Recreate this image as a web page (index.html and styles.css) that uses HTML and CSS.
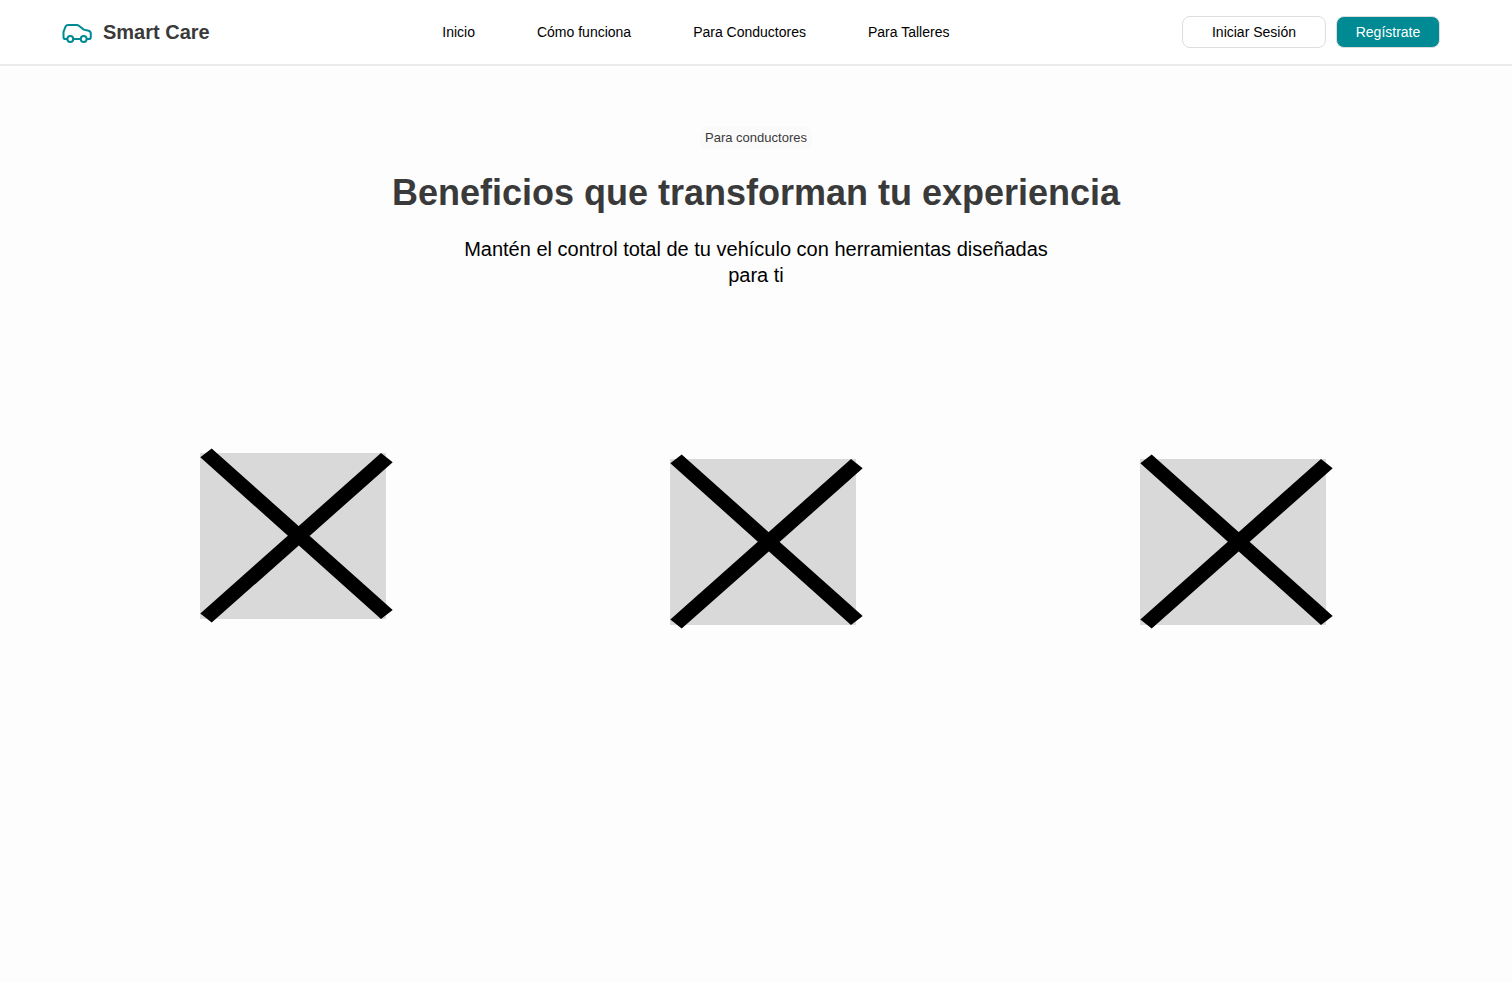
FILE: index.html
```
<!DOCTYPE html>
<html lang="es">
<head>
  <meta charset="utf-8">
  <meta name="viewport" content="width=device-width, initial-scale=1">
  <title>Smart Care</title>
  <link rel="stylesheet" href="styles.css">
</head>
<body>
  <header class="header">
    <a class="brand" href="#">
      <svg class="brand-icon" width="30" height="22" viewBox="0 -2 30 22" fill="none" stroke="currentColor" stroke-width="2" stroke-linejoin="round" aria-hidden="true">
        <path d="M5.2 16H3.3Q1.5 16 1.5 14.2V8.8L3.5 3.7Q4.2 2 6.2 2H14.6Q16 2 17.2 3L21.8 6.6L26.6 7.8Q28.8 8.5 28.8 10.6V14.2Q28.8 16 27 16H24.9M11.4 16H18.6"/>
        <circle cx="8.3" cy="16" r="2.9"/>
        <circle cx="21.7" cy="16" r="2.9"/>
      </svg>
      <span>Smart Care</span>
    </a>
    <nav class="nav">
      <a href="#">Inicio</a>
      <a href="#">Cómo funciona</a>
      <a href="#">Para Conductores</a>
      <a href="#">Para Talleres</a>
    </nav>
    <div class="actions">
      <button class="button button-login" type="button">Iniciar Sesión</button>
      <button class="button button-signup" type="button">Regístrate</button>
    </div>
  </header>
  <main class="main">
    <section class="intro">
      <span class="tag">Para conductores</span>
      <h1 class="title">Beneficios que transforman tu experiencia</h1>
      <p class="lead">Mantén el control total de tu vehículo con herramientas diseñadas para ti</p>
    </section>
    <section class="benefits">
      <svg class="placeholder" viewBox="0 0 193 176" aria-hidden="true">
        <path fill="#d9d9d9" d="M0 5h186v166H0z"/>
        <path d="M.3 9.3 11.7.5 192.7 162 181 171zM181 5l11.7 9.3L11.7 174.6.3 165.4z"/>
      </svg>
      <svg class="placeholder placeholder-low" viewBox="0 0 193 176" aria-hidden="true">
        <path fill="#d9d9d9" d="M0 5h186v166H0z"/>
        <path d="M.3 9.3 11.7.5 192.7 162 181 171zM181 5l11.7 9.3L11.7 174.6.3 165.4z"/>
      </svg>
      <svg class="placeholder placeholder-low" viewBox="0 0 193 176" aria-hidden="true">
        <path fill="#d9d9d9" d="M0 5h186v166H0z"/>
        <path d="M.3 9.3 11.7.5 192.7 162 181 171zM181 5l11.7 9.3L11.7 174.6.3 165.4z"/>
      </svg>
    </section>
  </main>
</body>
</html>
```

FILE: styles.css
```
* {
  box-sizing: border-box;
}

body {
  margin: 0;
  background: #fdfdfd;
  color: #000;
  font-family: "Liberation Sans", Arial, sans-serif;
}

.header {
  display: flex;
  align-items: center;
  justify-content: space-between;
  min-height: 66px;
  padding: 0 72px 0 62px;
  border-bottom: 2px solid #ebebeb;
  background: #fff;
}

.brand {
  display: flex;
  align-items: center;
  gap: 11px;
  color: #3a3a3a;
  font-size: 20px;
  font-weight: 700;
  line-height: 24px;
  text-decoration: none;
}

.brand-icon {
  color: #008a93;
}

.nav {
  display: flex;
  gap: 62px;
}

.nav a {
  color: #000;
  font-size: 14px;
  line-height: 20px;
  text-decoration: none;
}

.actions {
  display: flex;
  gap: 10px;
}

.button {
  height: 32px;
  border: 1px solid #dedede;
  border-radius: 8px;
  font: 14px/20px "Liberation Sans", Arial, sans-serif;
}

.button-login {
  min-width: 144px;
  background: #fff;
  color: #000;
}

.button-signup {
  min-width: 104px;
  background: #008a93;
  color: #fff;
}

.intro {
  display: flex;
  flex-direction: column;
  align-items: center;
  padding: 61px 24px 0;
  text-align: center;
}

.tag {
  padding: 2px 5px;
  border-radius: 8px;
  background: #fafafa;
  color: #3a3a3a;
  font-size: 13px;
  line-height: 18px;
}

.title {
  margin: 20px 0 0;
  color: #3a3a3a;
  font-size: 36px;
  font-weight: 700;
  line-height: 48px;
}

.lead {
  max-width: 620px;
  margin: 19px 0 0;
  font-size: 20px;
  line-height: 26px;
}

.benefits {
  display: flex;
  justify-content: space-between;
  padding: 160px 179px 48px 200px;
}

.placeholder {
  width: 193px;
  height: 176px;
}

.placeholder-low {
  margin-top: 6px;
}
```
